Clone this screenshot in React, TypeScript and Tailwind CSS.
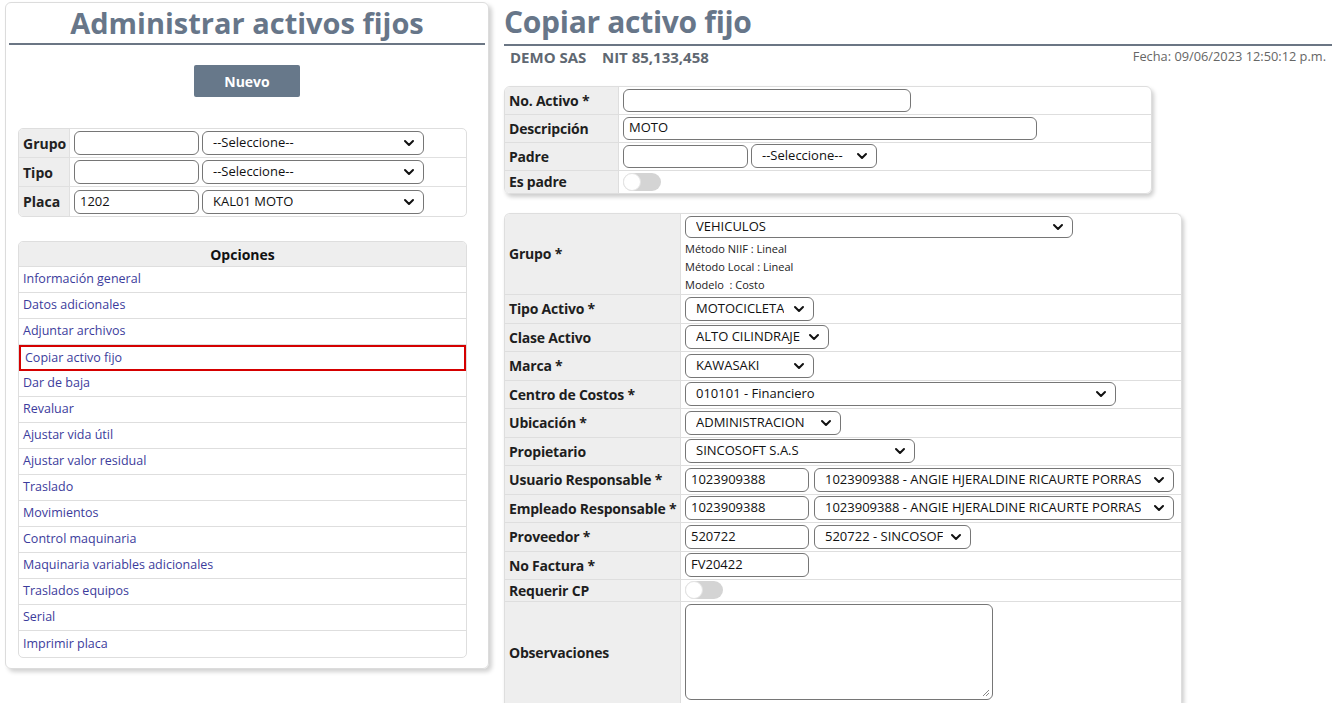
import React from "react";

const Chevron = () => (
  <svg width="12" height="12" viewBox="0 0 12 12" className="shrink-0">
    <path d="M2 4 L6 8 L10 4" fill="none" stroke="#111" strokeWidth="2" strokeLinecap="round" strokeLinejoin="round" />
  </svg>
);

const Select = ({ text, w, pl = "pl-[10px]" }: { text: string; w: string; pl?: string }) => (
  <div className={`${w} h-[24px] border border-[#767676] rounded-[6px] bg-white flex items-center justify-between ${pl} pr-[8px] text-[13px] text-[#111] whitespace-nowrap overflow-hidden`}>
    <span className="overflow-hidden">{text}</span>
    <Chevron />
  </div>
);

const Input = ({ text = "", w, h = "h-[24px]" }: { text?: string; w: string; h?: string }) => (
  <div className={`${w} ${h} border border-[#767676] rounded-[6px] bg-white flex items-center px-[5px] text-[13px] text-[#111] whitespace-nowrap`}>
    {text}
  </div>
);

const Toggle = () => (
  <div className="w-[38px] h-[18px] rounded-full bg-[#d4d4d4] relative">
    <div className="absolute left-0 top-0 w-[18px] h-[18px] rounded-full bg-white border border-[#e4e4e4]" />
  </div>
);

const options = [
  "Información general",
  "Datos adicionales",
  "Adjuntar archivos",
  "Copiar activo fijo",
  "Dar de baja",
  "Revaluar",
  "Ajustar vida útil",
  "Ajustar valor residual",
  "Traslado",
  "Movimientos",
  "Control maquinaria",
  "Maquinaria variables adicionales",
  "Traslados equipos",
  "Serial",
  "Imprimir placa",
];

const FilterRow = ({ label, input, select, last }: { label: string; input: string; select: string; last?: boolean }) => (
  <div className={`flex h-[29px] ${last ? "" : "border-b border-[#e0e0e0]"}`}>
    <div className="w-[51px] bg-[#eeeeee] border-r border-[#e0e0e0] flex items-center pl-[4px] text-[14px] font-bold text-[#222]">{label}</div>
    <div className="flex items-center pl-[4px] gap-[3px]">
      <Input w="w-[125px]" text={input} />
      <Select w="w-[222px]" text={select} />
    </div>
  </div>
);

const FRow = ({ label, h, lw, children, last, top }: { label: string; h: string; lw: string; children?: React.ReactNode; last?: boolean; top?: boolean }) => (
  <div className={`flex ${h} ${last ? "" : "border-b border-[#dedede]"}`}>
    <div className={`${lw} shrink-0 bg-[#eeeeee] border-r border-[#dedede] flex items-center pl-[4px] text-[14px] font-bold text-[#1e1e1e] whitespace-nowrap tracking-[-0.2px]`}>{label}</div>
    <div className={`flex ${top ? "items-start pt-[2px]" : "items-center"} pl-[4px] gap-[5px]`}>{children}</div>
  </div>
);

export default function App() {
  return (
    <div className="w-[1332px] h-[703px] overflow-hidden bg-white flex font-['Open_Sans',sans-serif]">
      {/* Left panel */}
      <div className="ml-[5px] mt-[2px] w-[484px] h-[667px] shrink-0 border border-[#dcdcdc] rounded-[6px] shadow-[3px_3px_4px_rgba(0,0,0,0.18)] px-[3px] flex flex-col">
        <h1 className="text-[29px] font-bold text-[#677689] text-center leading-[40px] border-b-2 border-[#6b7684]">
          Administrar activos fijos
        </h1>
        <div className="flex justify-center mt-[20px]">
          <div className="w-[106px] h-[32px] bg-[#67788a] rounded-[2px] flex items-center justify-center text-white font-bold text-[14px]">Nuevo</div>
        </div>
        <div className="ml-[9px] w-[449px] mt-[31px] border border-[#dedede] rounded-[5px] overflow-hidden">
          <FilterRow label="Grupo" input="" select="--Seleccione--" />
          <FilterRow label="Tipo" input="" select="--Seleccione--" />
          <FilterRow label="Placa" input="1202" select="KAL01 MOTO" last />
        </div>
        <div className="ml-[9px] w-[449px] mt-[24px] border border-[#dedede] rounded-[5px] overflow-hidden">
          <div className="h-[25px] bg-[#eeeeee] border-b border-[#dedede] flex items-center justify-center text-[14px] font-bold text-[#111]">Opciones</div>
          {options.map((o, i) => (
            <div
              key={o}
              className={`h-[26px] flex items-center pl-[4px] text-[12.5px] text-[#3c3c9c] ${
                o === "Copiar activo fijo" ? "border-2 border-[#d50000]" : i < options.length - 1 ? "border-b border-[#dedede]" : ""
              }`}
            >
              {o}
            </div>
          ))}
        </div>
      </div>

      {/* Right panel */}
      <div className="ml-[15px] flex-1 flex flex-col">
        <h1 className="text-[30px] font-bold text-[#677689] leading-[44px] border-b-2 border-[#6b7684] tracking-[-0.3px]">Copiar activo fijo</h1>
        <div className="flex justify-between items-start">
          <div className="pl-[6px] text-[15px] font-bold text-[#5f6872] whitespace-pre">DEMO SAS    NIT 85,133,458</div>
          <div className="pr-[6px] pt-[1px] text-[12.8px] text-[#666]">Fecha: 09/06/2023 12:50:12 p.m.</div>
        </div>

        <div className="mt-[17px] w-[648px] border border-[#dedede] rounded-[6px] overflow-hidden shadow-[2px_3px_4px_rgba(0,0,0,0.2)]">
          <FRow label="No. Activo *" h="h-[28px]" lw="w-[114px]">
            <Input w="w-[288px]" h="h-[23px]" />
          </FRow>
          <FRow label="Descripción" h="h-[28px]" lw="w-[114px]">
            <Input w="w-[414px]" h="h-[23px]" text="MOTO" />
          </FRow>
          <FRow label="Padre" h="h-[28px]" lw="w-[114px]">
            <Input w="w-[125px]" h="h-[23px]" />
            <div className="-ml-[2px]"><Select w="w-[126px]" text="--Seleccione--" /></div>
          </FRow>
          <FRow label="Es padre" h="h-[22px]" lw="w-[114px]" last>
            <Toggle />
          </FRow>
        </div>

        <div className="mt-[19px] w-[678px] border border-[#dedede] rounded-t-[6px] border-b-0 overflow-hidden shadow-[2px_3px_4px_rgba(0,0,0,0.2)]">
          <div className="flex h-[81px] border-b border-[#dedede]">
            <div className="w-[176px] shrink-0 bg-[#eeeeee] border-r border-[#dedede] flex items-center pl-[4px] text-[14px] font-bold text-[#1e1e1e] tracking-[-0.2px]">Grupo *</div>
            <div className="pl-[4px] pt-[2px] flex flex-col">
              <Select w="w-[388px]" text="VEHICULOS" />
              <div className="mt-[2px] text-[11px] leading-[18px] text-[#222]">
                <div>Método NIIF : Lineal</div>
                <div>Método Local : Lineal</div>
                <div>Modelo &nbsp;: Costo</div>
              </div>
            </div>
          </div>
          <FRow label="Tipo Activo *" h="h-[29px]" lw="w-[176px]"><Select w="w-[129px]" text="MOTOCICLETA" /></FRow>
          <FRow label="Clase Activo" h="h-[28px]" lw="w-[176px]"><Select w="w-[144px]" text="ALTO CILINDRAJE" /></FRow>
          <FRow label="Marca *" h="h-[29px]" lw="w-[176px]"><Select w="w-[129px]" text="KAWASAKI" /></FRow>
          <FRow label="Centro de Costos *" h="h-[28px]" lw="w-[176px]"><Select w="w-[431px]" text="010101 - Financiero" /></FRow>
          <FRow label="Ubicación *" h="h-[29px]" lw="w-[176px]"><Select w="w-[156px]" text="ADMINISTRACION" /></FRow>
          <FRow label="Propietario" h="h-[28px]" lw="w-[176px]"><Select w="w-[230px]" text="SINCOSOFT S.A.S" /></FRow>
          <FRow label="Usuario Responsable *" h="h-[29px]" lw="w-[176px]">
            <Input w="w-[124px]" text="1023909388" />
            <Select w="w-[360px]" text="1023909388 - ANGIE HJERALDINE RICAURTE PORRAS" />
          </FRow>
          <FRow label="Empleado Responsable *" h="h-[28px]" lw="w-[176px]">
            <Input w="w-[124px]" text="1023909388" />
            <Select w="w-[360px]" text="1023909388 - ANGIE HJERALDINE RICAURTE PORRAS" />
          </FRow>
          <FRow label="Proveedor *" h="h-[29px]" lw="w-[176px]">
            <Input w="w-[124px]" text="520722" />
            <Select w="w-[157px]" text="520722 - SINCOSOF" />
          </FRow>
          <FRow label="No Factura *" h="h-[28px]" lw="w-[176px]"><Input w="w-[124px]" text="FV20422" /></FRow>
          <FRow label="Requerir CP" h="h-[22px]" lw="w-[176px]"><Toggle /></FRow>
          <div className="flex h-[101px]">
            <div className="w-[176px] shrink-0 bg-[#eeeeee] border-r border-[#dedede] flex items-center pl-[4px] text-[14px] font-bold text-[#1e1e1e] tracking-[-0.2px]">Observaciones</div>
            <div className="pl-[4px] pt-[2px]">
              <div className="w-[308px] h-[96px] border border-[#767676] rounded-[6px] bg-white relative">
                <svg width="8" height="8" viewBox="0 0 8 8" className="absolute right-[2px] bottom-[2px]">
                  <path d="M7 1 L1 7 M7 4 L4 7" stroke="#888" strokeWidth="1" />
                </svg>
              </div>
            </div>
          </div>
        </div>
      </div>
    </div>
  );
}
